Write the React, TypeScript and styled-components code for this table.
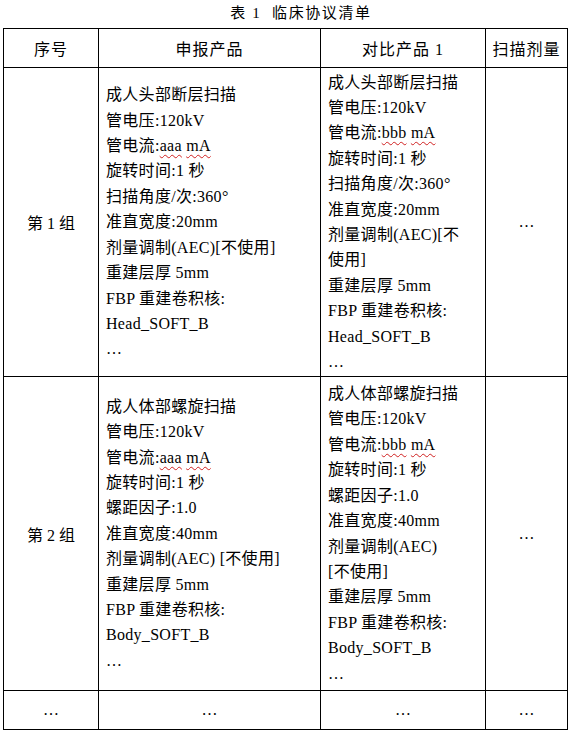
import React from 'react';
import styled, { createGlobalStyle } from 'styled-components';

const GlobalStyle = createGlobalStyle`
  body {
    margin: 0;
    background: #ffffff;
    color: #000000;
    font-family: "Liberation Serif", "Noto Sans CJK SC", serif;
  }
`;

const Page = styled.div`
  width: 570px;
  padding: 0 3px;
  box-sizing: border-box;
`;

const Caption = styled.div`
  text-align: center;
  font-size: 15px;
  line-height: 27px;
  height: 28px;
  letter-spacing: 1.6px;
  padding-left: 32px;
  white-space: pre;
`;

const Table = styled.table`
  width: 564px;
  border-collapse: collapse;
  table-layout: fixed;
  font-size: 16px;
`;

const HeadCell = styled.th`
  border: 1px solid #000;
  height: 38px;
  padding: 0;
  font-weight: normal;
  text-align: center;
  vertical-align: middle;
  letter-spacing: 1px;
`;

const Row = styled.tr<{ $h: number }>`
  height: ${(p) => p.$h}px;
`;

const Cell = styled.td<{ $center?: boolean }>`
  border: 1px solid #000;
  padding: 0 ${(p) => (p.$center ? 0 : 7)}px;
  text-align: ${(p) => (p.$center ? 'center' : 'left')};
  vertical-align: middle;
`;

const Lines = styled.div`
  line-height: 25.4px;
  white-space: nowrap;
  letter-spacing: 0.3px;
`;

const Line = styled.div``;

const Squiggle = styled.span`
  text-decoration: underline wavy #d02020;
  text-decoration-thickness: 1px;
  text-underline-offset: 3px;
`;

const Dots = styled.span`
  font-family: "Liberation Serif", serif;
`;

const group1Left = [
  '成人头部断层扫描',
  '管电压:120kV',
  'CUR:aaa',
  '旋转时间:1 秒',
  '扫描角度/次:360°',
  '准直宽度:20mm',
  '剂量调制(AEC)[不使用]',
  '重建层厚 5mm',
  'FBP 重建卷积核:',
  'Head_SOFT_B',
  '…',
];

const group1Right = [
  '成人头部断层扫描',
  '管电压:120kV',
  'CUR:bbb',
  '旋转时间:1 秒',
  '扫描角度/次:360°',
  '准直宽度:20mm',
  '剂量调制(AEC)[不',
  '使用]',
  '重建层厚 5mm',
  'FBP 重建卷积核:',
  'Head_SOFT_B',
  '…',
];

const group2Left = [
  '成人体部螺旋扫描',
  '管电压:120kV',
  'CUR:aaa',
  '旋转时间:1 秒',
  '螺距因子:1.0',
  '准直宽度:40mm',
  '剂量调制(AEC) [不使用]',
  '重建层厚 5mm',
  'FBP 重建卷积核:',
  'Body_SOFT_B',
  '…',
];

const group2Right = [
  '成人体部螺旋扫描',
  '管电压:120kV',
  'CUR:bbb',
  '旋转时间:1 秒',
  '螺距因子:1.0',
  '准直宽度:40mm',
  '剂量调制(AEC)',
  '[不使用]',
  '重建层厚 5mm',
  'FBP 重建卷积核:',
  'Body_SOFT_B',
  '…',
];

// 管电流 lines carry the red spell-check squiggle under the placeholder values
function renderLine(text: string, i: number) {
  if (text.startsWith('CUR:')) {
    const v = text.slice(4);
    return (
      <Line key={i}>
        管电流:<Squiggle>{v}</Squiggle> <Squiggle>mA</Squiggle>
      </Line>
    );
  }
  if (text === '…') {
    return (
      <Line key={i}>
        <Dots>…</Dots>
      </Line>
    );
  }
  return <Line key={i}>{text}</Line>;
}

const Params = ({ items }: { items: string[] }) => <Lines>{items.map(renderLine)}</Lines>;

export default function App() {
  return (
    <Page>
      <GlobalStyle />
      <Caption>{'表 1  临床协议清单'}</Caption>
      <Table>
        <colgroup>
          <col style={{ width: 95 }} />
          <col style={{ width: 222 }} />
          <col style={{ width: 165 }} />
          <col style={{ width: 82 }} />
        </colgroup>
        <thead>
          <tr>
            <HeadCell>序号</HeadCell>
            <HeadCell>申报产品</HeadCell>
            <HeadCell>对比产品 1</HeadCell>
            <HeadCell>扫描剂量</HeadCell>
          </tr>
        </thead>
        <tbody>
          <Row $h={309}>
            <Cell $center>第 1 组</Cell>
            <Cell><Params items={group1Left} /></Cell>
            <Cell><Params items={group1Right} /></Cell>
            <Cell $center><Dots>…</Dots></Cell>
          </Row>
          <Row $h={314}>
            <Cell $center>第 2 组</Cell>
            <Cell><Params items={group2Left} /></Cell>
            <Cell><Params items={group2Right} /></Cell>
            <Cell $center><Dots>…</Dots></Cell>
          </Row>
          <Row $h={39}>
            <Cell $center><Dots>…</Dots></Cell>
            <Cell $center><Dots>…</Dots></Cell>
            <Cell $center><Dots>…</Dots></Cell>
            <Cell $center><Dots>…</Dots></Cell>
          </Row>
        </tbody>
      </Table>
    </Page>
  );
}
